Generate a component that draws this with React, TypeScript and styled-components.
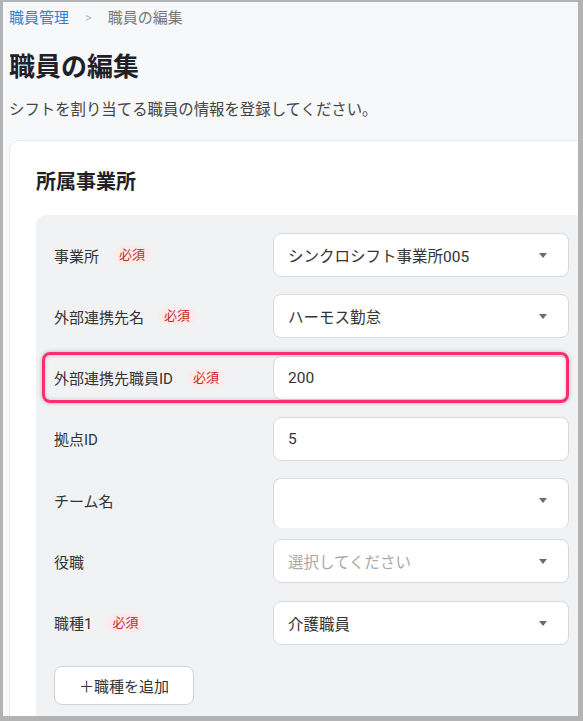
import styled, { createGlobalStyle } from "styled-components";

const GlobalStyle = createGlobalStyle`
  html, body {
    margin: 0;
    padding: 0;
    overflow: hidden;
  }
  body {
    font-family: Roboto, "Noto Sans CJK JP", sans-serif;
    color: #333;
  }
`

const Frame = styled.div`
  box-sizing: border-box;
  width: 583px;
  height: 721px;
  border-style: solid;
  border-color: #b3b3b3;
  border-width: 2px 5px 5px 3px;
  background: #f7f8fa;
  overflow: hidden;
  padding: 5px 0 0 6px;
`

const Breadcrumb = styled.nav`
  display: flex;
  align-items: center;
  gap: 16px;
  font-size: 15px;
  line-height: 22px;
  color: #777;
`

const CrumbLink = styled.a`
  color: #2f80d1;
  text-decoration: none;
`

const CrumbSep = styled.span`
  color: #bbb;
  font-size: 13px;
`

const Title = styled.h1`
  margin: 20px 0 0;
  font-size: 26px;
  line-height: 36px;
  font-weight: 700;
  color: #1f2126;
`

const Lead = styled.p`
  margin: 14px 0 0;
  font-size: 15.4px;
  line-height: 22px;
  color: #444;
`

const Card = styled.section`
  margin-top: 19px;
  width: 700px;
  background: #fff;
  border: 1px solid #e7e9ec;
  border-radius: 10px;
  padding: 27px 0 0 26px;
  min-height: 600px;
`

const CardTitle = styled.h2`
  margin: 0;
  font-size: 20px;
  line-height: 28px;
  font-weight: 700;
  color: #1f2126;
`

const Panel = styled.div`
  margin-top: 19px;
  background: #f1f2f4;
  border-radius: 10px;
  padding: 18px 18px 40px;
  display: flex;
  flex-direction: column;
  gap: 17.3px;
`

const Row = styled.div<{ $highlight?: boolean }>`
  position: relative;
  display: flex;
  align-items: center;
  height: 44px;
  width: 515px;

  ${({ $highlight }) => $highlight && `
    &::after {
      content: "";
      position: absolute;
      left: -12px;
      right: 0;
      top: -4px;
      bottom: -3px;
      border: 3px solid #ff2d6f;
      border-radius: 8px;
      box-shadow: 0 0 4px rgba(0, 0, 0, 0.25), inset 0 0 4px rgba(0, 0, 0, 0.2);
      pointer-events: none;
    }
  `}
`

const Label = styled.div`
  width: 219px;
  display: flex;
  align-items: center;
  gap: 14px;
  font-size: 15px;
  color: #333;
`

const Required = styled.span`
  display: inline-block;
  font-size: 13px;
  line-height: 18px;
  padding: 0 6px;
  border-radius: 9px;
  background: #fdeaea;
  color: #c62828;
`

const Field = styled.div<{ $cut?: boolean; $placeholder?: boolean }>`
  box-sizing: border-box;
  position: relative;
  width: 296px;
  height: 44px;
  background: #fff;
  border: 1px solid #d6d9de;
  border-radius: 8px;
  display: flex;
  align-items: center;
  padding: 0 40px 0 14px;
  font-size: 15.5px;
  color: ${({ $placeholder }) => ($placeholder ? "#a9a9a9" : "#333")};

  ${({ $cut }) => $cut && `
    height: 50px;
    align-self: flex-start;
    border-bottom: none;
    padding-bottom: 6px;
  `}
`

const Caret = styled.span`
  position: absolute;
  right: 21px;
  top: 19px;
  width: 0;
  height: 0;
  border-left: 4.5px solid transparent;
  border-right: 4.5px solid transparent;
  border-top: 5px solid #6b6b6b;
`

const AddButton = styled.button`
  margin-top: 4px;
  align-self: flex-start;
  height: 39px;
  padding: 0 24px;
  background: #fff;
  border: 1px solid #d0d4d9;
  border-radius: 8px;
  font-family: Roboto, "Noto Sans CJK JP", sans-serif;
  font-size: 15px;
  color: #333;
`

type FieldRow = {
  label: string;
  required?: boolean;
  value?: string;
  placeholder?: string;
  select?: boolean;
  highlight?: boolean;
  cut?: boolean;
}

const rows: FieldRow[] = [
  { label: "事業所", required: true, value: "シンクロシフト事業所005", select: true },
  { label: "外部連携先名", required: true, value: "ハーモス勤怠", select: true },
  { label: "外部連携先職員ID", required: true, value: "200", highlight: true },
  { label: "拠点ID", value: "5" },
  { label: "チーム名", value: "", select: true, cut: true },
  { label: "役職", placeholder: "選択してください", select: true },
  { label: "職種1", required: true, value: "介護職員", select: true },
]

export default function App() {
  return (
    <>
      <GlobalStyle />
      <Frame>
        <Breadcrumb>
          <CrumbLink href="#">職員管理</CrumbLink>
          <CrumbSep>&gt;</CrumbSep>
          <span>職員の編集</span>
        </Breadcrumb>
        <Title>職員の編集</Title>
        <Lead>シフトを割り当てる職員の情報を登録してください。</Lead>
        <Card>
          <CardTitle>所属事業所</CardTitle>
          <Panel>
            {rows.map((r) => (
              <Row key={r.label} $highlight={r.highlight}>
                <Label>
                  {r.label}
                  {r.required && <Required>必須</Required>}
                </Label>
                <Field $cut={r.cut} $placeholder={!!r.placeholder}>
                  {r.value || r.placeholder}
                  {r.select && <Caret />}
                </Field>
              </Row>
            ))}
            <AddButton>＋職種を追加</AddButton>
          </Panel>
        </Card>
      </Frame>
    </>
  );
}
